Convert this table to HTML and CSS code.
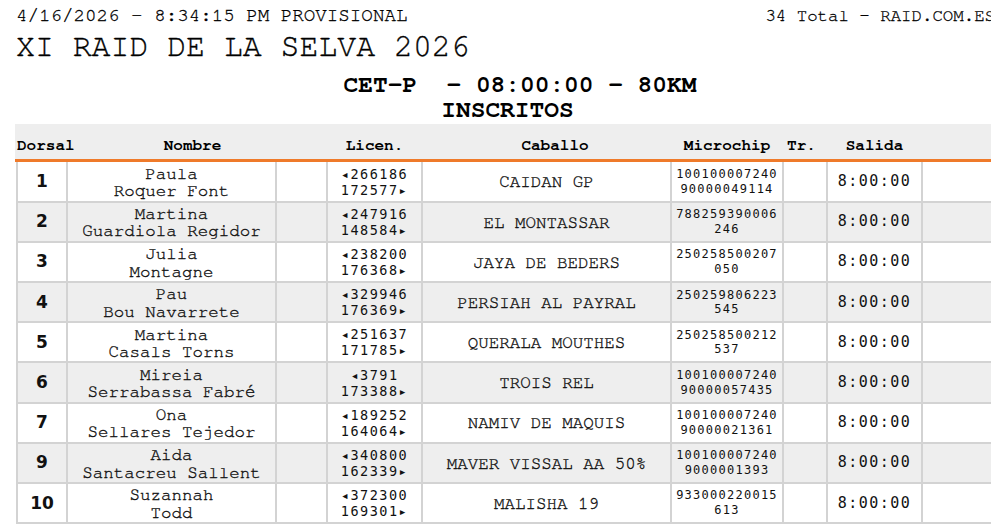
FILE: index.html
```html
<!DOCTYPE html>
<html lang="es">
<head>
<meta charset="utf-8">
<title>XI RAID DE LA SELVA 2026 - Inscritos</title>
<link rel="stylesheet" href="styles.css">
</head>
<body>
<div class="page">
  <div class="topline">
    <span>4/16/2026 - 8:34:15 PM PROVISIONAL</span>
    <span class="total">34 Total - RAID.COM.ES</span>
  </div>
  <div class="title">XI RAID DE LA SELVA 2026</div>
  <div class="heading">
    <div class="race">CET-P&nbsp; - 08:00:00 - 80KM</div>
    <div>INSCRITOS</div>
  </div>

  <div class="list">
    <div class="thead">
      <div class="h-dorsal">Dorsal</div>
      <div class="h-nombre">Nombre</div>
      <div></div>
      <div>Licen.</div>
      <div class="h-caballo">Caballo</div>
      <div>Microchip</div>
      <div class="h-tr">Tr.</div>
      <div>Salida</div>
      <div></div>
    </div>

    <div class="row">
      <div class="dorsal">1</div>
      <div class="name">Paula<br>Roquer Font</div>
      <div></div>
      <div class="lic">◂266186<br>172577▸</div>
      <div class="horse">CAIDAN GP</div>
      <div class="chip">100100007240<br>90000049114</div>
      <div></div>
      <div class="time">8:00:00</div>
      <div></div>
    </div>
    <div class="row alt">
      <div class="dorsal">2</div>
      <div class="name">Martina<br>Guardiola Regidor</div>
      <div></div>
      <div class="lic">◂247916<br>148584▸</div>
      <div class="horse">EL MONTASSAR</div>
      <div class="chip">788259390006<br>246</div>
      <div></div>
      <div class="time">8:00:00</div>
      <div></div>
    </div>
    <div class="row">
      <div class="dorsal">3</div>
      <div class="name">Julia<br>Montagne</div>
      <div></div>
      <div class="lic">◂238200<br>176368▸</div>
      <div class="horse">JAYA DE BEDERS</div>
      <div class="chip">250258500207<br>050</div>
      <div></div>
      <div class="time">8:00:00</div>
      <div></div>
    </div>
    <div class="row alt">
      <div class="dorsal">4</div>
      <div class="name">Pau<br>Bou Navarrete</div>
      <div></div>
      <div class="lic">◂329946<br>176369▸</div>
      <div class="horse">PERSIAH AL PAYRAL</div>
      <div class="chip">250259806223<br>545</div>
      <div></div>
      <div class="time">8:00:00</div>
      <div></div>
    </div>
    <div class="row">
      <div class="dorsal">5</div>
      <div class="name">Martina<br>Casals Torns</div>
      <div></div>
      <div class="lic">◂251637<br>171785▸</div>
      <div class="horse">QUERALA MOUTHES</div>
      <div class="chip">250258500212<br>537</div>
      <div></div>
      <div class="time">8:00:00</div>
      <div></div>
    </div>
    <div class="row alt">
      <div class="dorsal">6</div>
      <div class="name">Mireia<br>Serrabassa Fabré</div>
      <div></div>
      <div class="lic">◂3791<br>173388▸</div>
      <div class="horse">TROIS REL</div>
      <div class="chip">100100007240<br>90000057435</div>
      <div></div>
      <div class="time">8:00:00</div>
      <div></div>
    </div>
    <div class="row">
      <div class="dorsal">7</div>
      <div class="name">Ona<br>Sellares Tejedor</div>
      <div></div>
      <div class="lic">◂189252<br>164064▸</div>
      <div class="horse">NAMIV DE MAQUIS</div>
      <div class="chip">100100007240<br>90000021361</div>
      <div></div>
      <div class="time">8:00:00</div>
      <div></div>
    </div>
    <div class="row alt">
      <div class="dorsal">9</div>
      <div class="name">Aida<br>Santacreu Sallent</div>
      <div></div>
      <div class="lic">◂340800<br>162339▸</div>
      <div class="horse">MAVER VISSAL AA 50%</div>
      <div class="chip">100100007240<br>9000001393</div>
      <div></div>
      <div class="time">8:00:00</div>
      <div></div>
    </div>
    <div class="row">
      <div class="dorsal">10</div>
      <div class="name">Suzannah<br>Todd</div>
      <div></div>
      <div class="lic">◂372300<br>169301▸</div>
      <div class="horse">MALISHA 19</div>
      <div class="chip">933000220015<br>613</div>
      <div></div>
      <div class="time">8:00:00</div>
      <div></div>
    </div>
  </div>
</div>
</body>
</html>
```

FILE: styles.css
```css
* { box-sizing: border-box; }

html, body {
  margin: 0;
  overflow: hidden;
  background: #fff;
}

body {
  font-family: "Nimbus Mono PS", "Nimbus Mono L", "FreeMono", "Courier New", "Liberation Mono", monospace;
  color: #000;
}

.page {
  padding: 5px 0 0 16px;
  width: 1020px;
}

.topline {
  display: flex;
  justify-content: space-between;
  align-items: baseline;
  width: 979px;
  font-size: 19.2px;
  line-height: 22px;
  height: 22px;
  white-space: pre;
  -webkit-text-stroke: 0.3px #000;
}

.topline .total {
  font-size: 17.4px;
}

.title {
  font-size: 31.5px;
  line-height: 39.2px;
  height: 39.2px;
  margin-bottom: 6.3px;
  white-space: nowrap;
  -webkit-text-stroke: 0.35px #000;
}

.heading {
  width: 983px;
  text-align: center;
  font-weight: bold;
  font-size: 24.5px;
  line-height: 25px;
  white-space: nowrap;
}

.heading .race {
  padding-left: 25px;
}

.list {
  margin-top: 1.5px;
  width: 1000px;
}

.thead,
.row {
  display: grid;
  grid-template-columns: 48px 207px 49px 93px 247px 110px 42px 93px 92px;
  column-gap: 2px;
}

.thead {
  margin-left: -1px;
  padding-left: 3px;
  height: 38.5px;
  background: #eeeeee;
  border-bottom: 3px solid #ef7a2a;
  font-weight: bold;
  font-size: 16px;
  line-height: 27.5px;
}

.thead > div {
  padding-top: 8px;
  text-align: center;
  white-space: nowrap;
}

.thead .h-dorsal {
  text-align: left;
  margin-left: -1px;
}

.thead .h-nombre { padding-left: 42px; }
.thead .h-caballo { padding-left: 17px; }
.thead .h-tr { padding-right: 7px; }

.row {
  padding: 0 0 2px 2px;
  background: #d3d3d3;
}

.row > div {
  height: 38.2px;
  background: #fff;
  display: flex;
  flex-direction: column;
  justify-content: center;
  align-items: center;
  text-align: center;
  white-space: nowrap;
}

.row.alt > div {
  background: #eeeeee;
}

.row > .dorsal {
  font-family: "DejaVu Sans", Verdana, sans-serif;
  font-weight: bold;
  font-size: 17px;
  line-height: 17px;
  color: #111;
}

.row > .name {
  display: block;
  padding-top: 3.3px;
  font-size: 17.5px;
  line-height: 17.4px;
  color: #111;
  -webkit-text-stroke: 0.35px #111;
}

.row > .horse {
  padding-top: 3px;
  font-size: 17.5px;
  line-height: 17.5px;
  color: #111;
  -webkit-text-stroke: 0.35px #111;
}

.row > .lic {
  display: block;
  padding-top: 3.1px;
  font-family: "DejaVu Sans Mono", monospace;
  font-size: 13.5px;
  letter-spacing: 1.5px;
  line-height: 16px;
  color: #111;
}

.row > .chip {
  display: block;
  padding-top: 4.5px;
  font-family: "DejaVu Sans Mono", monospace;
  font-size: 12px;
  letter-spacing: 1.25px;
  line-height: 14.6px;
  color: #111;
}

.row > .time {
  font-family: "DejaVu Sans Mono", monospace;
  font-size: 15px;
  letter-spacing: 1.5px;
  line-height: 15px;
  color: #111;
}
```
